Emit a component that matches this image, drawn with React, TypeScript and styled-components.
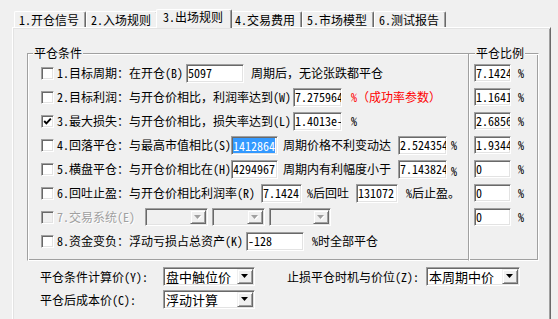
import React from "react";
import styled, { createGlobalStyle, css } from "styled-components";

const FONT = `"Noto Sans Mono CJK SC", "Noto Sans CJK SC", "Noto Sans CJK JP", sans-serif`;

const GlobalStyle = createGlobalStyle`
  html, body { margin: 0; padding: 0; background: #f0f0f0; }
  body { font-family: ${FONT}; font-size: 12px; color: #000; }
`;

const Window = styled.div`
  width: 558px;
  height: 319px;
  overflow: hidden;
  background: #f0f0f0;
  font-family: ${FONT};
  font-size: 12px;
  line-height: 14px;
  color: #000;
  display: flex;
  flex-direction: column;
`;

const TabStrip = styled.div`
  display: flex;
  align-items: flex-end;
  height: 27px;
  flex: none;
  padding-left: 14px;
  position: relative;
  z-index: 2;
`;

const Tab = styled.div<{ $active?: boolean }>`
  box-sizing: border-box;
  width: 72px;
  height: 16px;
  flex: none;
  padding: 1px 0 0 4px;
  border-top: 1px solid #fff;
  border-left: 1px solid #fff;
  border-right: 1px solid #696969;
  box-shadow: inset -1px 0 0 #a0a0a0;
  border-radius: 2px 2px 0 0;
  white-space: nowrap;
  background: #f0f0f0;
  ${(p) =>
    p.$active &&
    css`
      width: 76px;
      height: 19px;
      margin: 0 -2px -1px;
      padding: 0 0 0 6px;
      position: relative;
      z-index: 1;
    `}
`;

const Panel = styled.div`
  box-sizing: border-box;
  flex: none;
  margin-left: 12px;
  width: 539px;
  height: 300px;
  border-top: 1px solid #fff;
  border-left: 1px solid #fff;
  border-right: 1px solid #696969;
  box-shadow: inset 1px 1px 0 #e3e3e3, inset -1px 0 0 #a0a0a0;
  padding: 25px 11px 0 14px;
`;

const GroupBox = styled.div`
  position: relative;
  box-sizing: border-box;
  background: #f0f0f0;
  border: 1px solid #a0a0a0;
  border-right-color: #fff;
  border-bottom-color: #fff;
  box-shadow: inset 1px 1px 0 #fff, inset -1px -1px 0 #a0a0a0;
`;

const ConditionsBox = styled(GroupBox)`
  height: 208px;
  padding: 7px 0 0 13px;
  display: flex;
`;

const RatioBox = styled(GroupBox)`
  width: 71px;
  flex: none;
  margin: -8px -1px -1px 0;
  padding: 7px 0 0 5px;
  display: flex;
  flex-direction: column;
`;

const Caption = styled.span<{ $left: number }>`
  position: absolute;
  top: -8px;
  left: ${(p) => p.$left}px;
  padding: 0 1px;
  background: #f0f0f0;
  line-height: 14px;
  white-space: nowrap;
`;

const RowList = styled.div`
  flex: 1;
  display: flex;
  flex-direction: column;
`;

const Row = styled.div`
  display: flex;
  align-items: center;
  height: 24px;
  flex: none;
  white-space: nowrap;
`;

const CheckBox = styled.span<{ $disabled?: boolean }>`
  box-sizing: border-box;
  width: 13px;
  height: 13px;
  flex: none;
  border: 1px solid;
  border-color: #a0a0a0 #fff #fff #a0a0a0;
  box-shadow: inset 1px 1px 0 #696969, inset -1px -1px 0 #e3e3e3;
  background: ${(p) => (p.$disabled ? "#f0f0f0" : "#fff")};
  display: flex;
  align-items: center;
  justify-content: center;
`;

const Text = styled.span<{ $w?: number; $ml?: number; $dy?: number; $tone?: "red" | "disabled" }>`
  flex: none;
  width: ${(p) => (p.$w ? `${p.$w}px` : "auto")};
  margin-left: ${(p) => p.$ml ?? 0}px;
  position: relative;
  top: ${(p) => p.$dy ?? 0}px;
  line-height: 14px;
  white-space: nowrap;
  color: ${(p) => (p.$tone === "red" ? "#ff0000" : p.$tone === "disabled" ? "#a0a0a0" : "#000")};
  text-shadow: ${(p) => (p.$tone === "disabled" ? "1px 1px 0 #fff" : "none")};
`;

const Field = styled.div<{ $w: number; $h?: number; $ml?: number }>`
  box-sizing: border-box;
  flex: none;
  width: ${(p) => p.$w}px;
  height: ${(p) => p.$h ?? 19}px;
  margin-left: ${(p) => p.$ml ?? 0}px;
  border: 1px solid;
  border-color: #a0a0a0 #fff #fff #a0a0a0;
  box-shadow: inset 1px 1px 0 #696969, inset -1px -1px 0 #e3e3e3;
  background: #fff;
  padding: 1px;
  display: flex;
  align-items: center;
  overflow: hidden;
  white-space: nowrap;
  line-height: 14px;
`;

const Selected = styled.span`
  background: #3399ff;
  color: #fff;
  line-height: 15px;
`;

const Combo = styled.div<{ $w: number; $h?: number; $ml?: number; $disabled?: boolean }>`
  box-sizing: border-box;
  flex: none;
  width: ${(p) => p.$w}px;
  height: ${(p) => p.$h ?? 19}px;
  margin-left: ${(p) => p.$ml ?? 0}px;
  border: 1px solid;
  border-color: #a0a0a0 #fff #fff #a0a0a0;
  box-shadow: inset 1px 1px 0 #696969, inset -1px -1px 0 #e3e3e3;
  background: ${(p) => (p.$disabled ? "#f0f0f0" : "#fff")};
  padding: 1px;
  display: flex;
  align-items: stretch;
`;

const ComboText = styled.span`
  flex: 1;
  padding-left: 1px;
  font-size: 13px;
  line-height: 15px;
  white-space: nowrap;
  display: flex;
  align-items: center;
`;

const DropButton = styled.span`
  box-sizing: border-box;
  width: 16px;
  flex: none;
  background: #f0f0f0;
  border: 1px solid;
  border-color: #f0f0f0 #696969 #696969 #f0f0f0;
  box-shadow: inset 1px 1px 0 #fff, inset -1px -1px 0 #a0a0a0;
  display: flex;
  align-items: center;
  justify-content: center;
`;

const Footer = styled.div`
  display: flex;
  flex-direction: column;
  gap: 4px;
  margin-top: 6px;
  padding-left: 13px;
`;

const FooterRow = styled.div`
  display: flex;
  align-items: center;
  height: 19px;
  white-space: nowrap;
`;

const Check = () => (
  <svg width="9" height="9" viewBox="0 0 9 9">
    <polyline points="1.2,4 3.4,6.4 7.8,1.6" fill="none" stroke="#000" strokeWidth="1.9" />
  </svg>
);

const Arrow = ({ disabled }: { disabled?: boolean }) => (
  <svg width="8" height="5" viewBox="0 0 8 5">
    {disabled && <polygon points="1,1 8,1 4.5,5" fill="#fff" />}
    <polygon points="0,0 7,0 3.5,4" fill={disabled ? "#a0a0a0" : "#000"} />
  </svg>
);

const DropDown = ({
  w,
  h,
  ml,
  disabled,
  value,
}: {
  w: number;
  h?: number;
  ml?: number;
  disabled?: boolean;
  value?: string;
}) => (
  <Combo $w={w} $h={h} $ml={ml} $disabled={disabled}>
    <ComboText>{value}</ComboText>
    <DropButton>
      <Arrow disabled={disabled} />
    </DropButton>
  </Combo>
);

const tabs = ["1.开仓信号", "2.入场规则", "3.出场规则", "4.交易费用", "5.市场模型", "6.测试报告"];

const ratios = ["7.1424", "1.1641", "2.6856", "1.9344", "0", "0", "0"];

export default function App() {
  return (
    <Window>
      <GlobalStyle />
      <TabStrip>
        {tabs.map((t, i) => (
          <Tab key={t} $active={i === 2}>
            {t}
          </Tab>
        ))}
      </TabStrip>
      <Panel>
        <ConditionsBox>
          <Caption $left={5}>平仓条件</Caption>
          <RowList>
            <Row>
              <CheckBox />
              <Text $ml={3} $w={129}>1.目标周期：在开仓(B)</Text>
              <Field $w={58}>5097</Field>
              <Text $ml={7}>周期后，无论张跌都平仓</Text>
            </Row>
            <Row>
              <CheckBox />
              <Text $ml={3} $w={236}>2.目标利润：与开仓价相比，利润率达到(W)</Text>
              <Field $w={49}>7.275964</Field>
              <Text $ml={9} $tone="red">%（成功率参数）</Text>
            </Row>
            <Row>
              <CheckBox>
                <Check />
              </CheckBox>
              <Text $ml={3} $w={236}>3.最大损失：与开仓价相比，损失率达到(L)</Text>
              <Field $w={49}>1.4013e-</Field>
              <Text $ml={9}>%</Text>
            </Row>
            <Row>
              <CheckBox />
              <Text $ml={3} $w={174}>4.回落平仓：与最高市值相比(S)</Text>
              <Field $w={47}>
                <Selected>1412864</Selected>
              </Field>
              <Text $ml={5} $w={115}>周期价格不利变动达</Text>
              <Field $w={49}>2.524354</Field>
              <Text $ml={4}>%</Text>
            </Row>
            <Row>
              <CheckBox />
              <Text $ml={3} $w={174}>5.横盘平仓：与开仓价相比在(H)</Text>
              <Field $w={47}>4294967</Field>
              <Text $ml={5} $w={115}>周期内有利幅度小于</Text>
              <Field $w={49}>7.143824</Field>
              <Text $ml={4} $dy={2}>%</Text>
            </Row>
            <Row>
              <CheckBox />
              <Text $ml={3} $w={204}>6.回吐止盈：与开仓价相比利润率(R)</Text>
              <Field $w={41}>7.1424</Field>
              <Text $ml={5} $w={49}>%后回吐</Text>
              <Field $w={42}>131072</Field>
              <Text $ml={8}>%后止盈。</Text>
            </Row>
            <Row>
              <CheckBox $disabled />
              <Text $ml={3} $w={88} $tone="disabled">7.交易系统(E)</Text>
              <DropDown w={63} h={18} disabled />
              <DropDown w={53} h={18} ml={4} disabled />
              <DropDown w={62} h={18} ml={4} disabled />
            </Row>
            <Row>
              <CheckBox />
              <Text $ml={3} $w={189}>8.资金变负：浮动亏损占总资产(K)</Text>
              <Field $w={58}>-128</Field>
              <Text $ml={8}>%时全部平仓</Text>
            </Row>
          </RowList>
          <RatioBox>
            <Caption $left={6}>平仓比例</Caption>
            {ratios.map((r, i) => (
              <Row key={i}>
                <Field $w={37} $h={18}>{r}</Field>
                <Text $ml={7}>%</Text>
              </Row>
            ))}
          </RatioBox>
        </ConditionsBox>
        <Footer>
          <FooterRow>
            <Text $w={123}>平仓条件计算价(Y):</Text>
            <DropDown w={92} value="盘中触位价" />
            <Text $ml={32} $w={139}>止损平仓时机与价位(Z):</Text>
            <DropDown w={94} value="本周期中价" />
          </FooterRow>
          <FooterRow>
            <Text $w={123}>平仓后成本价(C):</Text>
            <DropDown w={92} value="浮动计算" />
          </FooterRow>
        </Footer>
      </Panel>
    </Window>
  );
}
